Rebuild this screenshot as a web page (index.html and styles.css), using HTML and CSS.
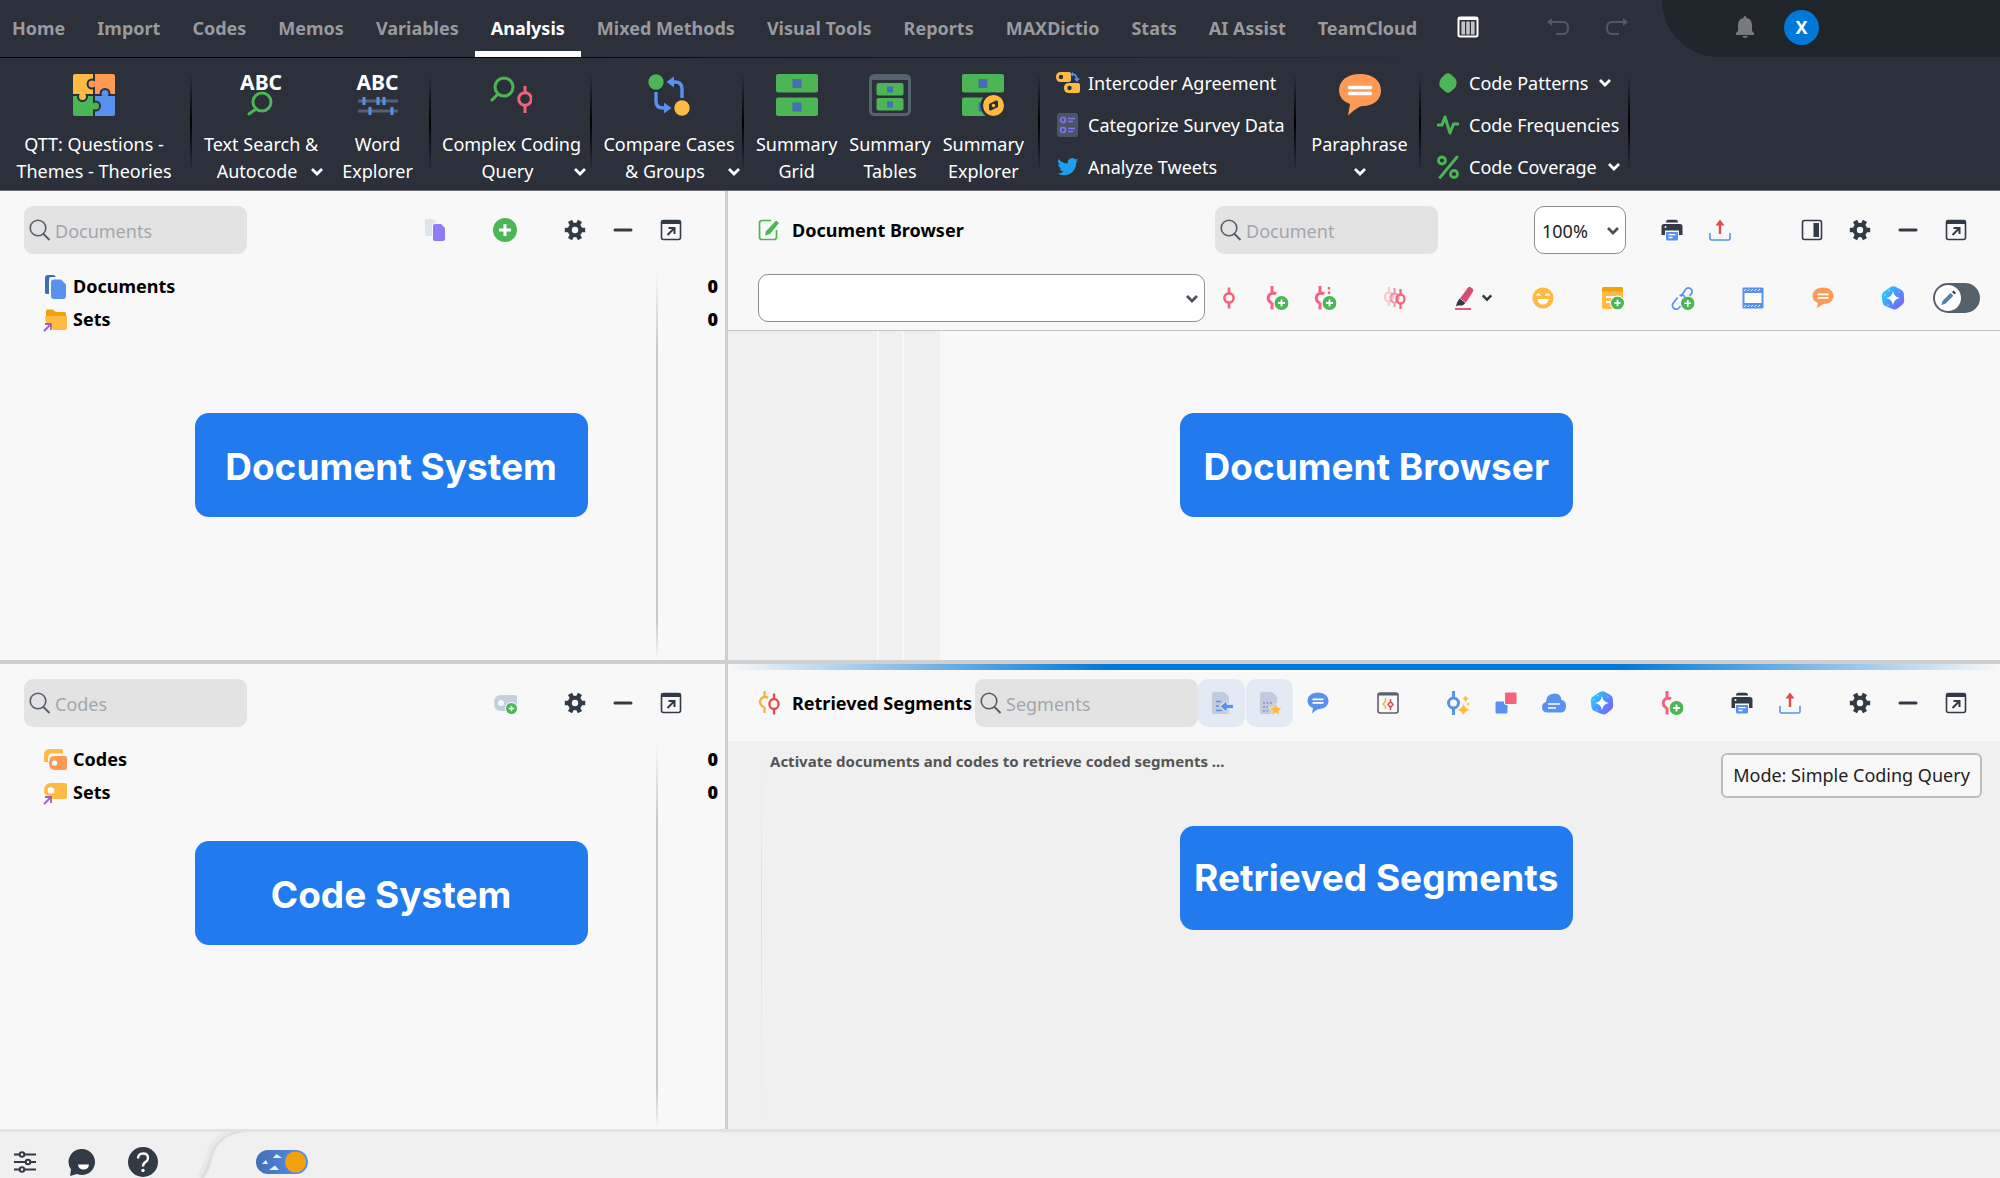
FILE: index.html
```html
<!DOCTYPE html>
<html lang="en">
<head>
<meta charset="utf-8">
<title>Analysis</title>
<link rel="stylesheet" href="styles.css">
</head>
<body>
<svg class="sprite" aria-hidden="true">
  <defs>
    <linearGradient id="ai-fill" x1="0" y1="0.2" x2="1" y2="0.9"><stop offset="0" stop-color="#1fd3ff"/><stop offset="0.5" stop-color="#4a93ff"/><stop offset="1" stop-color="#8a5cf8"/></linearGradient>
    <linearGradient id="sky" x1="0" x2="1"><stop offset="0" stop-color="#426fb5"/><stop offset="1" stop-color="#5891ee"/></linearGradient>
  </defs>
  <symbol id="chevron" viewBox="0 0 14 10"><path d="M2 2l5 5 5-5" fill="none" stroke="currentColor" stroke-width="2.8"/></symbol>
  <symbol id="search" viewBox="0 0 22 22"><circle cx="9" cy="9" r="7.8" fill="none" stroke="#56606b" stroke-width="1.6"/><path d="M14 14.500l6.500 6.500" stroke="#56606b" stroke-width="2"/></symbol>
  <symbol id="gear" viewBox="0 0 22 22"><circle cx="11" cy="11" r="7.300" fill="#323a45"/><path d="M.8 11h20.400M6 1.900l10 18.200M16 1.900L6 20.100" stroke="#323a45" stroke-width="4.600" stroke-linejoin="round"/><circle cx="11" cy="11" r="3.200" fill="#f8f8f8"/></symbol>
  <symbol id="minus" viewBox="0 0 22 22"><path d="M3 11h16" stroke="#323a45" stroke-width="3" stroke-linecap="round"/></symbol>
  <symbol id="popout" viewBox="0 0 22 22"><rect x="1.500" y="1.500" width="19" height="19" rx="2" fill="none" stroke="#323a45" stroke-width="1.600"/><path d="M1 5V3q0-2 2-2h16q2 0 2 2v2z" fill="#323a45"/><path d="M7.500 16l6.500-6.500M8.500 9h6v6" fill="none" stroke="#323a45" stroke-width="2"/></symbol>
  <symbol id="sidepane" viewBox="0 0 22 22"><rect x="1.500" y="1.500" width="19" height="19" rx="2" fill="none" stroke="#323a45" stroke-width="1.600"/><rect x="12.500" y="4" width="5.500" height="14" fill="#323a45"/></symbol>
  <symbol id="printer" viewBox="0 0 22 22"><path d="M5 3.500Q5 .8 7.500.8h7q2.500 0 2.500 2.700z" fill="#323a45"/><path d="M3 5h16q2.500 0 2.500 2.500V16H18v-4.500H4V16H.5V7.500Q.5 5 3 5z" fill="#323a45"/><circle cx="4.500" cy="8" r="1" fill="#fff"/><path d="M5 13h12v7q0 1.500-1.500 1.500h-9Q5 21.500 5 20z" fill="#5891ee"/><path d="M7.500 15.700h7M7.500 18.500h4" stroke="#fff" stroke-width="1.300"/></symbol>
  <symbol id="upload" viewBox="0 0 22 22"><path d="M11 15V3" stroke="#e5484d" stroke-width="2.400"/><path d="M6.500 6.500L11 .5l4.500 6z" fill="#e5484d"/><path d="M1 14v5.500q0 1.500 1.500 1.500h17q1.500 0 1.500-1.500V14" fill="none" stroke="#5891ee" stroke-width="1.600"/></symbol>
  <symbol id="code-red" viewBox="0 0 22 22"><path d="M11 .5v6M11 15.500v6" stroke="#f5627c" stroke-width="2.600"/><circle cx="11" cy="11" r="4.600" fill="none" stroke="#f5627c" stroke-width="2.600"/></symbol>
  <symbol id="badge-plus" viewBox="0 0 14 14"><circle cx="7" cy="7" r="7" fill="#4cb555"/><path d="M7 3.500v7M3.500 7h7" stroke="#fff" stroke-width="1.800"/></symbol>
  <symbol id="code-add" viewBox="0 0 24 24"><path d="M7 0v6.500M7 16.500v7M11 8A5 5 0 1 0 7 17" fill="none" stroke="#f5627c" stroke-width="3"/><use href="#badge-plus" x="9.500" y="10" width="14" height="14"/></symbol>
  <symbol id="code-add-dots" viewBox="0 0 24 24"><path d="M7 0v6.500M7 16.500v7M11 8A5 5 0 1 0 7 17" fill="none" stroke="#f5627c" stroke-width="3"/><path d="M16 1v8" stroke="#f5627c" stroke-width="2.400" stroke-dasharray="2.500 2"/><use href="#badge-plus" x="9.500" y="10" width="14" height="14"/></symbol>
  <symbol id="codes-fade" viewBox="0 0 22 22"><g fill="none" stroke="#f5627c" stroke-width="2.300"><g opacity=".3"><path d="M5 0v6M5 14v5"/><ellipse cx="5" cy="10" rx="4" ry="4.500"/></g><g opacity=".6"><path d="M10.500 1v6M10.500 15v5"/><ellipse cx="10.500" cy="11" rx="4" ry="4.500"/></g><path d="M16.500 2v6M16.500 16v6"/><ellipse cx="16.500" cy="12" rx="4" ry="4.500"/></g></symbol>
  <symbol id="marker" viewBox="0 0 22 24"><path d="M15 1.500q1.500-1.500 3 0l1.500 1Q21 4 20 5.500l-7 11-6-4z" fill="#db4a75"/><path d="M6.500 12.500l6 4.500-3 2.500H5l-2 1 1-4z" fill="#323a45"/><path d="M2 23h16" stroke="#db4a75" stroke-width="1.800"/></symbol>
  <symbol id="smile" viewBox="0 0 22 22"><circle cx="11" cy="11" r="10.600" fill="#fdbb43"/><path d="M5.500 12h11q-.5 5.500-5.500 5.500T5.500 12z" fill="#fff"/><path d="M4.500 8.800q2-3 4 0M13.500 8.800q2-3 4 0" fill="none" stroke="#fff" stroke-width="1.500"/></symbol>
  <symbol id="memo-add" viewBox="0 0 24 24"><rect x="1" y="1" width="21" height="22" rx="2" fill="#fdbb43"/><path d="M1 5.500V3q0-2 2-2h17q2 0 2 2v2.500z" fill="#f2a20d"/><path d="M5 11h9M5 16h5" stroke="#fff" stroke-width="1.800"/><circle cx="16.500" cy="17" r="7.500" fill="#f8f8f8"/><use href="#badge-plus" x="10" y="10.500" width="13" height="13"/></symbol>
  <symbol id="link-add" viewBox="0 0 24 24"><g fill="none" stroke="#5891ee" stroke-width="1.700"><path d="M10 10.500l4.500-7Q16.500.8 19.300 2.500t1.300 4.800L18.500 10"/><path d="M8.500 9.500q3.500-2 5.500 1.500M6.500 11.500l-4.500 6Q.5 20.500 3 22.500t5-.5l1.500-1.800"/></g><use href="#badge-plus" x="10" y="10.500" width="13.500" height="13.500"/></symbol>
  <symbol id="film" viewBox="0 0 22 22"><rect x=".5" y=".5" width="21" height="21" rx="1" fill="#5891ee"/><rect x="2.500" y="6" width="17" height="10" fill="#fff"/><path d="M2 4L4 2M5.500 4l2-2M9 4l2-2M12.500 4l2-2M16 4l2-2M2 20l2-2M5.500 20l2-2M9 20l2-2M12.500 20l2-2M16 20l2-2" stroke="#fff" stroke-width=".9"/></symbol>
  <symbol id="comment" viewBox="0 0 22 22"><path d="M11 .5C17 .5 21.500 4 21.500 9S17 17 11.500 17q-3 1-6.500 4.500l1-5.500Q.5 14 .5 9C.5 4 5 .5 11 .5z" fill="currentColor"/><path d="M5.500 7.300h11M5.500 10.800h11" stroke="#fff" stroke-width="1.700"/></symbol>
  <symbol id="ai" viewBox="0 0 24 24"><path d="M10 .8q3-1.300 5 .2l5.500 3q2 1.200 2.300 3.500l.4 7q0 2.500-1.700 4l-5 4q-2.300 1.500-5 .5l-7-3Q2 19 1.500 16.500L.8 10q0-2.500 1.500-4z" fill="url(#ai-fill)"/><path d="M12 5q1 6 7 7-6 1-7 7-1-6-7-7 6-1 7-7z" fill="#fff"/><g fill="#fff" opacity=".6"><circle cx="8" cy="4.500" r=".8"/><circle cx="4" cy="9" r=".8"/><circle cx="18" cy="6" r=".7"/><circle cx="7" cy="19" r=".8"/></g></symbol>
  <symbol id="doc-blue" viewBox="0 0 24 24"><path d="M2 18V3q0-3 3-3h6l2 2H8Q6 2 6 5v14H4q-2 0-2-1z" fill="#3f6db8"/><path d="M11 4.500h7l5 5V21q0 3-3 3h-9q-3 0-3-3V7.500q0-3 3-3z" fill="#5891ee"/></symbol>
  <symbol id="docs-violet" viewBox="0 0 22 22"><path d="M3 0h6l3 2v2Q8 4 8 8v9H3q-2 0-2-2V2q0-2 2-2z" fill="#dde3ef"/><path d="M11 5h6l4 4v11q0 2-2 2h-8q-2 0-2-2V7q0-2 2-2z" fill="#8f7bf8"/></symbol>
  <symbol id="folder" viewBox="0 0 24 24"><path d="M3 8V3q0-1.500 1.500-1.500H10l3 2.500h8.500Q23 4 23 5.500V9z" fill="#f2a20d"/><path d="M2 8h22v12q0 2-2 2H10l-2-6H3z" fill="#fdbb43"/><path d="M1 23l6.500-6.500M2 16h6v6" fill="none" stroke="#9a5fc0" stroke-width="1.800"/></symbol>
  <symbol id="codes-orange" viewBox="0 0 24 24"><path d="M1 14V7q0-6 6-6h11q2 0 2 2v2.500H9q-4 0-4 5V14z" fill="#fdbb43"/><path d="M11 8h11q2 0 2 2v10q0 2-2 2H11q-5 0-5-7t5-7z" fill="#ff9a55"/><circle cx="11.500" cy="15" r="2.600" fill="#fff"/></symbol>
  <symbol id="codeset" viewBox="0 0 24 24"><path d="M8 2h14q2 0 2 2v12q0 2-2 2H9L3 14q-2-1-2-4 0-8 7-8z" fill="#fdbb43"/><circle cx="8" cy="9.500" r="3.300" fill="#fff"/><path d="M1 23l6.500-6.500M2 16h6v6" fill="none" stroke="#9a5fc0" stroke-width="1.800"/></symbol>
  <symbol id="code-new" viewBox="0 0 24 22"><path d="M8 3h14q2 0 2 2v12q0 2-2 2H8q-7 0-7-8t7-8z" fill="#c5cfdf"/><circle cx="8" cy="11" r="3" fill="#f8f8f8"/><circle cx="18.500" cy="16.500" r="6.500" fill="#f8f8f8"/><use href="#badge-plus" x="13" y="11" width="11" height="11"/></symbol>
  <symbol id="edit-doc" viewBox="0 0 22 22"><path d="M13 1.500H4Q1.500 1.500 1.500 4v14q0 2.500 2.500 2.500h12q2.500 0 2.500-2.500V11" fill="none" stroke="#4cb555" stroke-width="1.700"/><path d="M18 1.500l3 2.500-9 11-5 1.500.8-4z" fill="#4cb555"/></symbol>
  <symbol id="segments" viewBox="0 0 22 24"><path d="M6.500 0v6M6.500 16v6M10 7A5 5 0 1 0 6.500 16" fill="none" stroke="#f5b33f" stroke-width="2.300"/><g fill="none" stroke="#e5484d" stroke-width="2.300"><path d="M16 2.500v6M16 17.500v6"/><ellipse cx="16" cy="13" rx="4.600" ry="5"/></g></symbol>
  <symbol id="doc-arrow" viewBox="0 0 24 24"><path d="M4 1h10l5 5v15q0 2-2 2H4q-2 0-2-2V3q0-2 2-2z" fill="#c1cbdc"/><path d="M6 10.500h5M6 15h3M6 19.500h6" stroke="#5891ee" stroke-width="1.600"/><path d="M10 15.500l7-6v3.800h6.500v4.400H17v3.800z" fill="#5891ee" stroke="#e3eaf4" stroke-width="1"/></symbol>
  <symbol id="doc-star" viewBox="0 0 24 24"><path d="M4 1h10l5 5v15q0 2-2 2H4q-2 0-2-2V3q0-2 2-2z" fill="#c1cbdc"/><path d="M5 12h9M5 16h5M5 20h5" stroke="#a184d8" stroke-width="1.600" stroke-dasharray="2 1.500"/><path d="M17.500 12l2 4.200 4.500.6-3.300 3 .9 4.500-4.100-2.200-4.100 2.200.9-4.500-3.300-3 4.500-.6z" fill="#fdbb43" stroke="#e3eaf4" stroke-width="1"/></symbol>
  <symbol id="segment-window" viewBox="0 0 22 22"><rect x="1" y="1" width="20" height="20" rx="2" fill="none" stroke="#5a626d" stroke-width="1.600"/><path d="M1 1h20v2.500H1z" fill="#5a626d"/><g fill="none" stroke-width="1.500"><path d="M8.500 6v3.500L6 12l2.500 2.500V17" stroke="#f5b33f"/><path d="M13.500 7v3M13.500 15v3M13.500 9.500L11 12.500l2.500 3 2.500-3z" stroke="#e5484d"/></g></symbol>
  <symbol id="code-sparkle" viewBox="0 0 24 24"><g fill="none" stroke="#5891ee" stroke-width="3"><path d="M7.500 0v7M7.500 17v7"/><circle cx="7.500" cy="12" r="5"/></g><g fill="#fdbb43"><path d="M17.500 13q1.500 4.500 6 6-4.500 1-6 5-1.500-4-6-5 4.500-1.500 6-6z"/><path d="M19.500 4.500q1 2.500 3 3-2 1-3 3.500-1-2.500-3-3.500 2-.5 3-3zM22 11.500l1.500 1.500-1.500 1.500-1.500-1.500z"/></g></symbol>
  <symbol id="squares" viewBox="0 0 22 22"><rect x=".5" y="9.500" width="12" height="12" rx="1.500" fill="#5891ee"/><rect x="9.500" y="0" width="12.500" height="12.500" rx="1.500" fill="#f5627c" stroke="#f8f8f8"/></symbol>
  <symbol id="cloud" viewBox="0 0 26 22"><path d="M6 20.500Q1 20 1 15q0-4 4-5 0-8 8.500-8.500Q20 1.500 20.500 8q4.500 1 4.500 6 0 6-5 6.500z" fill="#5891ee"/><path d="M7 12h12M7 16h8" stroke="#fff" stroke-width="1.700"/></symbol>
  <symbol id="coder" viewBox="0 0 24 22"><path d="M5 0h8q2 0 2 2v6q0 2-2 2H5Q0 10 0 5t5-5z" fill="#fdbb43"/><circle cx="5" cy="5" r="2.200" fill="#2b303a"/><path d="M13 11h9q2 0 2 2v6q0 2-2 2h-9q-5 0-5-5t5-5z" fill="#fdbb43"/><circle cx="13.500" cy="16" r="2.200" fill="#2b303a"/><path d="M17 2q4 1 4 6" fill="none" stroke="#5891ee" stroke-width="1.800"/><path d="M17 4.500V0l-3 2.500zM18 6.500h6L21 10z" fill="#5891ee"/></symbol>
  <symbol id="survey" viewBox="0 0 22 24"><rect x="0" y="0" width="21" height="24" rx="2.500" fill="#4a5567"/><g fill="none" stroke="#8275f5" stroke-width="1.700"><circle cx="6" cy="7" r="2.500"/><circle cx="6" cy="17" r="2.500"/><path d="M11 5.500h7M11 8.500h5M11 15.500h7M11 18.500h5"/></g></symbol>
  <symbol id="bird" viewBox="0 0 24 20"><path d="M23.600 2.400a9.500 9.500 0 0 1-2.800.8A4.800 4.800 0 0 0 22.900.6a9.600 9.600 0 0 1-3 1.100A4.800 4.800 0 0 0 11.700 6 13.700 13.700 0 0 1 1.700 1a4.800 4.800 0 0 0 1.500 6.400A4.800 4.800 0 0 1 1 6.800c0 2.300 1.600 4.300 3.900 4.800a4.800 4.800 0 0 1-2.200.1 4.800 4.800 0 0 0 4.500 3.300A9.700 9.700 0 0 1 0 17a13.600 13.600 0 0 0 7.400 2.200c9 0 14-7.500 13.700-14.300a9.800 9.800 0 0 0 2.500-2.500z" fill="#1d9ff0"/></symbol>
  <symbol id="pattern" viewBox="0 0 22 24"><path d="M8 2.500q3-2.500 6 0l4.500 4q2.500 2.500 2 5.500t-2 5.500l-4.500 4q-3 2.500-6 0l-4.500-4Q1 15 1.500 12t2-5.500z" fill="#4cb555"/></symbol>
  <symbol id="pulse" viewBox="0 0 22 22"><path d="M1 11h4l3-8 5 16 3.500-9H21" fill="none" stroke="#4cb555" stroke-width="3" stroke-linejoin="round" stroke-linecap="round"/></symbol>
  <symbol id="percent" viewBox="0 0 22 24"><g fill="none" stroke="#4cb555" stroke-width="2.800" stroke-linecap="round"><circle cx="5" cy="5.500" r="3.500"/><circle cx="17" cy="19" r="3.500"/><path d="M20 2L3 22.500"/></g></symbol>
</svg>

<header class="topbar">
  <nav class="tabs">
    <a class="tab" href="#">Home</a><a class="tab" href="#">Import</a><a class="tab" href="#">Codes</a><a class="tab" href="#">Memos</a><a class="tab" href="#">Variables</a><a class="tab active" href="#" aria-current="page">Analysis</a><a class="tab" href="#">Mixed Methods</a><a class="tab" href="#">Visual Tools</a><a class="tab" href="#">Reports</a><a class="tab" href="#">MAXDictio</a><a class="tab" href="#">Stats</a><a class="tab" href="#">AI Assist</a><a class="tab" href="#">TeamCloud</a>
  </nav>
  <div class="quick">
    <button class="plain" aria-label="Layout"><svg width="22" height="22" viewBox="0 0 22 22"><rect x="1.500" y="1.500" width="19" height="19" rx="1.500" fill="none" stroke="#fff" stroke-width="2"/><path d="M1 2.500h20" stroke="#fff" stroke-width="3"/><path d="M6.200 5.500v13M11 5.500v13M15.800 5.500v13" stroke="#c4c4c6" stroke-width="3.600"/></svg></button>
    <span class="undo-pair">
      <button class="plain" aria-label="Undo"><svg width="22" height="18" viewBox="0 0 22 18"><path d="M3 4h13q5 0 5 6t-5 6H9" fill="none" stroke="#4f5a68" stroke-width="2"/><path d="M5 0v8L0 4z" fill="#4f5a68"/></svg></button>
      <button class="plain" aria-label="Redo"><svg width="22" height="18" viewBox="0 0 22 18"><path d="M19 4H6Q1 4 1 10t5 6h7" fill="none" stroke="#4f5a68" stroke-width="2"/><path d="M17 0v8l5-4z" fill="#4f5a68"/></svg></button>
    </span>
  </div>
  <div class="account">
    <button class="plain" aria-label="Notifications"><svg width="18" height="22" viewBox="0 0 18 22"><path d="M9 0q1.500 0 1.500 2Q16 3 16 9v6l2 2v2H0v-2l2-2V9q0-6 5.500-7Q7.500 0 9 0zM6 20h6q-1 2-3 2t-3-2z" fill="#77797e"/></svg></button>
    <button class="avatar">X</button>
  </div>
</header>

<div class="ribbon">
  <div class="group g-qtt">
    <button class="big">
      <svg width="42" height="42" viewBox="0 0 42 42"><path d="M2 0h18v20H0V2q0-2 2-2z" fill="#fdbb43"/><path d="M22 0h18q2 0 2 2v18H22z" fill="#ff9a55"/><path d="M0 22h20v20H2q-2 0-2-2z" fill="#4cb555"/><path d="M22 22h20v18q0 2-2 2H22z" fill="#5891ee"/><g stroke="#2b303a" stroke-width="2"><circle cx="19" cy="10" r="4.500" fill="#ff9a55"/><circle cx="9.500" cy="22.500" r="4.500" fill="#fdbb43"/><circle cx="32" cy="19.500" r="4.500" fill="#5891ee"/><circle cx="22.500" cy="32" r="4.500" fill="#4cb555"/></g><path d="M22 5h3v10h-3z" fill="#ff9a55"/><path d="M4 17h11v3H4z" fill="#fdbb43"/><path d="M27 22h10v3H27z" fill="#5891ee"/><path d="M17 27h3v10h-3z" fill="#4cb555"/></svg>
      <span>QTT: Questions -</span><span>Themes - Theories</span>
    </button>
  </div>
  <div class="group g-words">
    <button class="big">
      <span class="abc">ABC</span>
      <svg width="44" height="26" viewBox="0 16 44 26"><g fill="none" stroke="#4cb555" stroke-width="3" stroke-linecap="round"><circle cx="23" cy="28" r="9"/><path d="M17 35l-7 5"/></g></svg>
      <span>Text Search &amp;</span><span class="drop"><span>Autocode</span><svg class="chev"><use href="#chevron"/></svg></span>
    </button>
    <button class="big">
      <span class="abc">ABC</span>
      <svg width="44" height="26" viewBox="0 16 44 26"><path d="M2 27h40M2 37h40" stroke="#55616f" stroke-width="3"/><path d="M8 23v8M22 23v8M28 23v8M14 33v8M36 33v8" stroke="#5891ee" stroke-width="3"/></svg>
      <span>Word</span><span>Explorer</span>
    </button>
  </div>
  <div class="group g-query">
    <button class="big">
      <svg width="42" height="42" viewBox="0 0 42 42"><g fill="none" stroke="#4cb555" stroke-width="3" stroke-linecap="round"><circle cx="14" cy="13" r="9"/><path d="M8 20l-6 6"/></g><g fill="none" stroke="#f5627c" stroke-width="3"><path d="M35 12v7M35 31v8"/><circle cx="35" cy="25" r="6.300"/></g></svg>
      <span>Complex Coding</span><span class="drop"><span>Query</span><svg class="chev"><use href="#chevron"/></svg></span>
    </button>
  </div>
  <div class="group g-compare">
    <button class="big">
      <svg width="42" height="42" viewBox="0 0 42 42"><circle cx="8" cy="8" r="7.700" fill="#4cb555"/><circle cx="34" cy="34" r="7.700" fill="#fdbb43"/><g fill="none" stroke="#5891ee" stroke-width="3.400"><path d="M8 18v9q0 7 7 7h2M34 24v-9q0-7-7-7h-2"/></g><path d="M16 28.500v11l7.500-5.500zM26 2.500v11L18.500 8z" fill="#5891ee"/></svg>
      <span>Compare Cases</span><span class="drop"><span>&amp; Groups</span><svg class="chev"><use href="#chevron"/></svg></span>
    </button>
  </div>
  <div class="group g-summary">
    <button class="big">
      <svg width="42" height="42" viewBox="0 0 42 42"><rect width="42" height="18.500" rx="2" fill="#4cb555"/><rect y="23.500" width="42" height="18.500" rx="2" fill="#4cb555"/><path d="M16.500 5h9v9h-9zM16.500 28.500h9v9h-9z" fill="#426fb5"/></svg>
      <span>Summary</span><span>Grid</span>
    </button>
    <button class="big">
      <svg width="42" height="42" viewBox="0 0 42 42"><rect x="1.500" y="1.500" width="39" height="39" rx="4" fill="none" stroke="#56626f" stroke-width="3"/><path d="M2 2h38v4H2z" fill="#56626f"/><rect x="7.500" y="9" width="27" height="12.500" rx="2" fill="#4cb555"/><rect x="7.500" y="24" width="27" height="12.500" rx="2" fill="#4cb555"/><path d="M18 12.500h6v6h-6zM18 27.500h6v6h-6z" fill="#426fb5"/></svg>
      <span>Summary</span><span>Tables</span>
    </button>
    <button class="big">
      <svg width="42" height="42" viewBox="0 0 42 42"><rect width="42" height="18.500" rx="2" fill="#4cb555"/><rect y="23.500" width="40" height="18.500" rx="2" fill="#4cb555"/><path d="M16.500 5h9v9h-9zM16.500 28.500h9v9h-9z" fill="#426fb5"/><circle cx="31.500" cy="31.500" r="13" fill="#2b303a"/><circle cx="31.500" cy="31.500" r="10.500" fill="#fdbb43"/><path d="M27 30l7-3.500q2-.5 2 1.500v5l-7 3.500q-2 .5-2-1.500z" fill="#2b303a"/><circle cx="31.500" cy="31.500" r="1.700" fill="#fdbb43"/></svg>
      <span>Summary</span><span>Explorer</span>
    </button>
  </div>
  <div class="group list g-tools">
    <button class="small"><svg width="24" height="22"><use href="#coder"/></svg>Intercoder Agreement</button>
    <button class="small"><svg width="24" height="24"><use href="#survey"/></svg>Categorize Survey Data</button>
    <button class="small"><svg width="24" height="18"><use href="#bird"/></svg>Analyze Tweets</button>
  </div>
  <div class="group g-para">
    <button class="big">
      <svg width="42" height="42" viewBox="0 0 42 42"><path d="M21 0C33 0 42 6 42 16.500S33 32 24 32q-5 0-15 9.500L11 30Q0 26 0 16.500C0 6 9 0 21 0z" fill="#ff9a55"/><path d="M10.500 13.500h21M10.500 19.500h21" stroke="#fff" stroke-width="3.500" stroke-linecap="round"/></svg>
      <span>Paraphrase</span><span class="solo"><svg class="chev"><use href="#chevron"/></svg></span>
    </button>
  </div>
  <div class="group list g-codes">
    <button class="small"><svg width="22" height="22"><use href="#pattern"/></svg>Code Patterns<svg class="chev"><use href="#chevron"/></svg></button>
    <button class="small"><svg width="22" height="22"><use href="#pulse"/></svg>Code Frequencies</button>
    <button class="small"><svg width="22" height="24"><use href="#percent"/></svg>Code Coverage<svg class="chev"><use href="#chevron"/></svg></button>
  </div>
</div>

<main class="workspace">
  <section class="pane docs">
    <div class="toolbar">
      <label class="search"><svg width="22" height="22"><use href="#search"/></svg><input type="search" placeholder="Documents" aria-label="Search documents"></label>
      <div class="tools push">
        <button class="tool" aria-label="Activated documents"><svg><use href="#docs-violet"/></svg></button>
        <button class="tool gap" aria-label="Add document"><svg width="24" height="24"><use href="#badge-plus"/></svg></button>
        <button class="tool gap" aria-label="Settings"><svg><use href="#gear"/></svg></button>
        <button class="tool" aria-label="Minimize"><svg><use href="#minus"/></svg></button>
        <button class="tool" aria-label="Undock"><svg><use href="#popout"/></svg></button>
      </div>
    </div>
    <div class="tree">
      <ul>
        <li><svg width="24" height="24"><use href="#doc-blue"/></svg><span>Documents</span><b>0</b></li>
        <li><svg width="24" height="24"><use href="#folder"/></svg><span>Sets</span><b>0</b></li>
      </ul>
    </div>
    <div class="callout">Document System</div>
  </section>
  <section class="pane browser">
    <div class="toolbar">
      <h2><svg width="22" height="22"><use href="#edit-doc"/></svg>Document Browser</h2>
      <label class="search push"><svg width="22" height="22"><use href="#search"/></svg><input type="search" placeholder="Document" aria-label="Search document"></label>
      <span class="combo zoom"><select aria-label="Zoom"><option>100%</option></select><svg class="chev"><use href="#chevron"/></svg></span>
      <div class="tools gap">
        <button class="tool" aria-label="Print"><svg><use href="#printer"/></svg></button>
        <button class="tool" aria-label="Export"><svg><use href="#upload"/></svg></button>
        <button class="tool gap-wide" aria-label="Sidebar"><svg><use href="#sidepane"/></svg></button>
        <button class="tool" aria-label="Settings"><svg><use href="#gear"/></svg></button>
        <button class="tool" aria-label="Minimize"><svg><use href="#minus"/></svg></button>
        <button class="tool" aria-label="Undock"><svg><use href="#popout"/></svg></button>
      </div>
    </div>
    <div class="toolbar second">
      <span class="combo code-list"><select aria-label="Code list"><option></option></select><svg class="chev"><use href="#chevron"/></svg></span>
      <div class="tools">
        <button class="tool" aria-label="Code"><svg><use href="#code-red"/></svg></button>
        <button class="tool" aria-label="Code with new code"><svg width="24" height="24"><use href="#code-add"/></svg></button>
        <button class="tool" aria-label="Open coding"><svg width="24" height="24"><use href="#code-add-dots"/></svg></button>
        <button class="tool gap" aria-label="Recent codes"><svg><use href="#codes-fade"/></svg></button>
        <button class="tool gap marker" aria-label="Highlight"><svg width="22" height="24"><use href="#marker"/></svg><svg class="chev mini"><use href="#chevron"/></svg></button>
        <button class="tool gap" aria-label="Emoticode"><svg><use href="#smile"/></svg></button>
        <button class="tool gap" aria-label="New memo"><svg width="24" height="24"><use href="#memo-add"/></svg></button>
        <button class="tool gap" aria-label="Add link"><svg width="24" height="24"><use href="#link-add"/></svg></button>
        <button class="tool gap" aria-label="Media"><svg><use href="#film"/></svg></button>
        <button class="tool gap orange" aria-label="Comment"><svg><use href="#comment"/></svg></button>
        <button class="tool gap" aria-label="AI Assist"><svg width="24" height="24"><use href="#ai"/></svg></button>
      </div>
      <label class="switch push"><input type="checkbox" role="switch" aria-label="Edit mode"><span class="knob"><svg width="22" height="22" viewBox="0 0 22 22"><path d="M4.500 18l1-4 8-8 2.800 2.800-8 8z" fill="#4d7eb5"/><path d="M15 5l1.500-1.500 2.500 2.500-1.500 1.500z" fill="#323a45"/></svg></span></label>
    </div>
    <div class="page-area"><div class="margin m1"></div><div class="margin m2"></div><div class="margin m3"></div></div>
    <div class="callout">Document Browser</div>
  </section>
  <section class="pane codes">
    <div class="toolbar">
      <label class="search"><svg width="22" height="22"><use href="#search"/></svg><input type="search" placeholder="Codes" aria-label="Search codes"></label>
      <div class="tools push">
        <button class="tool" aria-label="New code"><svg width="24" height="22"><use href="#code-new"/></svg></button>
        <button class="tool gap" aria-label="Settings"><svg><use href="#gear"/></svg></button>
        <button class="tool" aria-label="Minimize"><svg><use href="#minus"/></svg></button>
        <button class="tool" aria-label="Undock"><svg><use href="#popout"/></svg></button>
      </div>
    </div>
    <div class="tree">
      <ul>
        <li><svg width="24" height="24"><use href="#codes-orange"/></svg><span>Codes</span><b>0</b></li>
        <li><svg width="24" height="24"><use href="#codeset"/></svg><span>Sets</span><b>0</b></li>
      </ul>
    </div>
    <div class="callout">Code System</div>
  </section>
  <section class="pane segments">
    <div class="toolbar">
      <h2><svg width="22" height="24"><use href="#segments"/></svg>Retrieved Segments</h2>
      <label class="search push"><svg width="22" height="22"><use href="#search"/></svg><input type="search" placeholder="Segments" aria-label="Search segments"></label>
      <div class="tools">
        <button class="tool on" aria-label="Source"><svg width="24" height="24"><use href="#doc-arrow"/></svg></button>
        <button class="tool on" aria-label="Weights"><svg width="24" height="24"><use href="#doc-star"/></svg></button>
        <button class="tool blue" aria-label="Comments"><svg><use href="#comment"/></svg></button>
        <button class="tool gap" aria-label="Overview"><svg><use href="#segment-window"/></svg></button>
        <button class="tool gap" aria-label="Smart coding"><svg width="24" height="24"><use href="#code-sparkle"/></svg></button>
        <button class="tool" aria-label="Category view"><svg><use href="#squares"/></svg></button>
        <button class="tool" aria-label="Word cloud"><svg width="26" height="22"><use href="#cloud"/></svg></button>
        <button class="tool" aria-label="AI Assist"><svg width="24" height="24"><use href="#ai"/></svg></button>
        <button class="tool gap" aria-label="Autocode"><svg width="24" height="24"><use href="#code-add"/></svg></button>
        <button class="tool gap" aria-label="Print"><svg><use href="#printer"/></svg></button>
        <button class="tool" aria-label="Export"><svg><use href="#upload"/></svg></button>
        <button class="tool gap" aria-label="Settings"><svg><use href="#gear"/></svg></button>
        <button class="tool" aria-label="Minimize"><svg><use href="#minus"/></svg></button>
        <button class="tool" aria-label="Undock"><svg><use href="#popout"/></svg></button>
      </div>
    </div>
    <div class="results"><p>Activate documents and codes to retrieve coded segments ...</p><button class="mode">Mode: Simple Coding Query</button></div>
    <div class="callout">Retrieved Segments</div>
  </section>
</main>

<footer class="status">
  <button class="plain" aria-label="Options"><svg width="22" height="22" viewBox="0 0 22 22"><g fill="#f0f0f0" stroke="#323a45" stroke-width="2"><path d="M0 3.500h22M0 11h22M0 18.500h22"/><circle cx="8" cy="3.500" r="2.300"/><circle cx="14" cy="11" r="2.300"/><circle cx="8" cy="18.500" r="2.300"/></g></svg></button>
  <button class="plain" aria-label="Chat"><svg width="28" height="28" viewBox="0 0 28 28"><path d="M14 1a13 13 0 1 1-5 25L2 28l1-6.500A13 13 0 0 1 14 1z" fill="#323a45"/><path d="M10 16.500h11q-.5 5-5.500 5T10 16.500z" fill="#fff"/></svg></button>
  <button class="plain" aria-label="Help"><svg width="30" height="30" viewBox="0 0 30 30"><circle cx="15" cy="15" r="15" fill="#323a45"/><path d="M10 11.500Q10 6.500 15 6.500t5 4.500q0 2.500-2.500 4T15 19.500" fill="none" stroke="#fff" stroke-width="2.400"/><circle cx="15" cy="23.500" r="1.700" fill="#fff"/></svg></button>
  <svg class="curve" width="60" height="46" viewBox="0 0 60 46" aria-hidden="true"><path d="M4 46Q10 40 14 26 20 1 50 0" fill="none" stroke="#e9e9e9" stroke-width="10"/><path d="M6 46Q12 40 15 26 21 3 50 0" fill="none" stroke="#dedede" stroke-width="4"/><path d="M8 46Q14 38 16 27 22 2 50 0H60V46z" fill="#f0f0f0"/></svg>
  <label class="theme"><input type="checkbox" aria-label="Light theme" checked><svg width="52" height="24" viewBox="0 0 52 24"><rect width="52" height="24" rx="12" fill="url(#sky)"/><path d="M17 8l3.500-4L26 8zM6 14l4-4 2 4zM13 20l6-4.500 4 4.500z" fill="#fff" opacity=".9"/><circle cx="39.500" cy="12" r="10.500" fill="#f2a20d"/></svg></label>
</footer>
</body>
</html>
```
FILE: styles.css
```css
* { box-sizing: border-box; }

body {
  margin: 0;
  min-height: 100vh;
  display: grid;
  grid-template-rows: auto auto 1fr auto;
  font: 18px/27px "Noto Sans", "Open Sans", sans-serif;
  color: #111;
  background: #f8f8f8;
}

button, input, select { font: inherit; color: inherit; }
button { margin: 0; padding: 0; border: 0; background: none; }
svg { display: block; flex: none; }
.sprite { position: absolute; width: 0; height: 0; }
.plain { display: grid; place-items: center; }
.chev { width: 14px; height: 10px; }
.push { margin-left: auto; }

/* Tab bar */
.topbar {
  height: 58px;
  display: flex;
  align-items: stretch;
  background: linear-gradient(90deg, #000 20%, #2b303a 73%) bottom / 100% 1px no-repeat, #2b303a;
}
.tabs { display: flex; margin-left: -4px; }
.tab {
  padding: 15px 16px 9px;
  margin-bottom: 1px;
  border-bottom: 6px solid transparent;
  font-weight: 700;
  color: #989a9e;
  text-decoration: none;
  white-space: nowrap;
}
.tab.active { color: #fff; border-bottom-color: #fff; }
.quick { display: flex; align-items: center; gap: 68px; margin-left: 24px; padding-bottom: 4px; }
.undo-pair { display: flex; gap: 37px; }
.account {
  width: 338px;
  height: 57px;
  margin-left: auto;
  padding: 0 0 3px 74px;
  display: flex;
  align-items: center;
  gap: 30px;
  border-bottom-left-radius: 58px;
  background: #20242b;
}
.avatar { width: 35px; height: 35px; border-radius: 50%; background: #0078d7; color: #fff; font-size: 18px; font-weight: 700; }

/* Ribbon */
.ribbon { display: flex; height: 133px; background: #2b303a; border-bottom: 1px solid #6f6b73; color: #fff; }
.group {
  display: flex;
  justify-content: space-evenly;
  padding-top: 16px;
  background: linear-gradient(transparent, #000 50%, transparent) right 16px / 2px 98px no-repeat;
}
.g-qtt { width: 192px; padding-right: 4px; }
.g-words { width: 239px; padding-right: 6px; justify-content: center; gap: 24px; }
.g-query { width: 161px; }
.g-compare { width: 152px; padding-left: 2px; }
.g-summary { width: 296px; padding-right: 4px; }
.g-tools { width: 256px; }
.g-para { width: 125px; padding-left: 2px; }
.g-codes { width: 209px; }
.big { display: flex; flex-direction: column; align-items: center; align-self: flex-start; white-space: nowrap; }
.big > svg { margin-bottom: 15px; }
.abc { height: 16px; line-height: 16px; font-size: 21px; font-weight: 700; }
.drop { align-self: stretch; display: flex; align-items: center; }
.drop > span { flex: 1; }
.drop .chev { margin-right: -6px; }
.solo { height: 27px; display: grid; place-items: center; }
.group.list { flex-direction: column; justify-content: flex-start; padding: 4px 0 0 16px; }
.small { height: 42px; display: flex; align-items: center; gap: 10px; white-space: nowrap; }
.g-tools .small { gap: 8px; }

/* Workspace */
.workspace {
  display: grid;
  grid-template-columns: 725fr 1272fr;
  grid-template-rows: 469fr 465fr;
  gap: 4px 3px;
  background: #cfcfcf;
  border-bottom: 3px solid #e2e2e2;
}
.pane { position: relative; display: flex; flex-direction: column; min-width: 0; background: #f8f8f8; }
.toolbar { display: flex; align-items: center; padding: 15px 30px 0 24px; }
.browser .toolbar, .segments .toolbar { padding: 15px 20px 0 30px; }
.toolbar h2 { display: flex; align-items: center; gap: 12px; margin: 0; font-size: 18px; line-height: 27px; color: #000; white-space: nowrap; }
.search { width: 223px; height: 48px; padding-left: 5px; display: flex; align-items: center; gap: 4px; border-radius: 9px; background: #e3e3e3; }
.search input { width: 100%; min-width: 0; padding: 2px 0 0; border: 0; outline: 0; background: none; }
.search input::placeholder { color: #a2a6ac; opacity: 1; }
.tools { display: flex; }
.tool { width: 48px; height: 48px; display: grid; place-items: center; border-radius: 10px; }
.tool svg:not([width]):not(.chev) { width: 22px; height: 22px; }
.gap { margin-left: 22px; }
.gap-wide { margin-left: 44px; }
.tool.on { background: #e3eaf4; border-right: 1px solid #f8f8f8; }
.orange { color: #ff9a55; }
.blue { color: #5891ee; }
.marker { display: flex; align-items: center; justify-content: center; gap: 6px; width: 56px; padding-left: 8px; color: #323a45; }
.mini { width: 12px; }
.combo { display: flex; position: relative; color: #4a525c; }
.combo select { width: 100%; height: 48px; padding: 2px 8px 0 7px; border: 1px solid #8f8f8f; border-radius: 10px; background: #fff; color: #222; appearance: none; }
.combo .chev { position: absolute; right: 6px; top: 20px; pointer-events: none; }
.zoom { width: 92px; margin-left: 96px; }
.code-list { width: 447px; }
.browser .second { padding-top: 20px; padding-bottom: 8px; border-bottom: 1px solid #c4c4c4; }
.switch { width: 47px; height: 30px; padding: 2px; border-radius: 15px; background: #56616c; }
.switch input, .theme input { position: absolute; opacity: 0; margin: 0; }
.knob { display: grid; place-items: center; width: 26px; height: 26px; border-radius: 50%; background: #fff; }
.page-area { flex: 1; display: flex; gap: 2px; }
.margin { background: #f0f0f0; }
.m1 { width: 149px; }
.m2 { width: 23px; }
.m3 { width: 36px; }

.tree { flex: 1; margin-top: 16px; background: linear-gradient(transparent, #c9c9c9 20%, #c9c9c9 90%, transparent) right 67px top / 2px 100% no-repeat; }
.tree ul { list-style: none; margin: 0; padding: 0 7px 0 43px; }
.tree li { display: flex; align-items: center; gap: 6px; height: 33px; font-weight: 700; color: #000; }
.tree b { margin-left: auto; }

.segments::before { content: ""; position: absolute; inset: 0 0 auto; height: 6px; background: linear-gradient(90deg, transparent, #0078d7 30%, #0078d7 70%, transparent); }
.results { flex: 1; display: flex; justify-content: space-between; align-items: flex-start; margin-top: 14px; padding: 12px 18px 0 42px; background: linear-gradient(transparent, #dedede 40%, transparent) 33px 8px / 1px 100% no-repeat, #f0f0f0; }
.results p { margin: 0; line-height: 16px; font-size: 15px; font-weight: 700; color: #555; }
.mode { width: 261px; height: 45px; border: 2px solid #bdbdbd; border-radius: 6px; background: #f8f8f8; color: #222; white-space: nowrap; }

/* Labels laid over the four panes */
.callout {
  position: absolute;
  left: 54%;
  top: 222px;
  width: 393px;
  height: 104px;
  margin-left: -197px;
  border-radius: 14px;
  background: #217bee;
  color: #fff;
  font: 700 37px/108px Inter, sans-serif;
  text-align: center;
  white-space: nowrap;
}
.browser .callout, .segments .callout { left: 51%; }
.codes .callout { top: 177px; }
.segments .callout { top: 162px; line-height: 104px; }

/* Status bar */
.status { height: 46px; display: flex; align-items: center; padding: 13px 14px 0; background: #f0f0f0; }
.status .plain + .plain { margin-left: 32px; }
.curve { margin: -13px 0 0 38px; }
.theme { display: flex; }
```
